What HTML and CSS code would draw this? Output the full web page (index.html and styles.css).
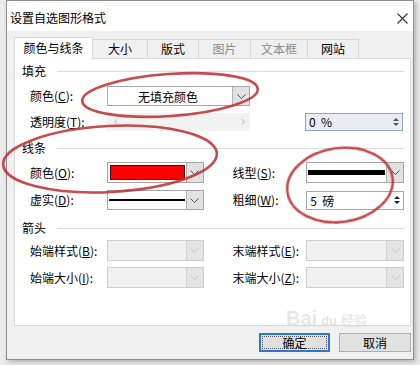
FILE: index.html
```html
<!DOCTYPE html>
<html lang="zh">
<head>
<meta charset="utf-8">
<title>设置自选图形格式</title>
<link rel="stylesheet" href="styles.css">
</head>
<body>
<div class="dialog">
  <div class="titlebar">
    <span class="title">设置自选图形格式</span>
    <svg class="close" viewBox="0 0 11 11"><path d="M0.5 0.5 L10.5 10.5 M10.5 0.5 L0.5 10.5" stroke="#333" stroke-width="1.1" fill="none"/></svg>
  </div>
  <div class="content">
    <div class="tabs">
      <div class="tab active">颜色与线条</div>
      <div class="tab">大小</div>
      <div class="tab">版式</div>
      <div class="tab disabled">图片</div>
      <div class="tab disabled">文本框</div>
      <div class="tab">网站</div>
    </div>
    <div class="panel">
      <div class="ghead g1"><span>填充</span></div>
      <div class="row r1">
        <span class="lbl">颜色(<u>C</u>):</span>
        <div class="combo wide">
          <div class="field center">无填充颜色</div>
          <div class="dd"><svg viewBox="0 0 9 5"><polyline points="0.5,0.5 4.5,4.5 8.5,0.5" fill="none" stroke="#555" stroke-width="1"/></svg></div>
        </div>
      </div>
      <div class="row r2">
        <span class="lbl">透明度(<u>T</u>):</span>
        <div class="slider wide"><span class="sarr">‹</span><span class="sarr">›</span></div>
        <div class="spin pct">
          <div class="val">0  %</div>
          <div class="arrows"><i class="up"></i><i class="down"></i></div>
        </div>
      </div>
      <div class="ghead g2"><span>线条</span></div>
      <div class="row r3">
        <span class="lbl">颜色(<u>O</u>):</span>
        <div class="combo narrow">
          <div class="field"><div class="swatch"></div></div>
          <div class="dd"><svg viewBox="0 0 9 5"><polyline points="0.5,0.5 4.5,4.5 8.5,0.5" fill="none" stroke="#555" stroke-width="1"/></svg></div>
        </div>
        <span class="lbl rlbl">线型(<u>S</u>):</span>
        <div class="combo rnarrow">
          <div class="field"><div class="line thick"></div></div>
          <div class="dd"><svg viewBox="0 0 9 5"><polyline points="0.5,0.5 4.5,4.5 8.5,0.5" fill="none" stroke="#555" stroke-width="1"/></svg></div>
        </div>
      </div>
      <div class="row r4">
        <span class="lbl">虚实(<u>D</u>):</span>
        <div class="combo narrow">
          <div class="field"><div class="line"></div></div>
          <div class="dd"><svg viewBox="0 0 9 5"><polyline points="0.5,0.5 4.5,4.5 8.5,0.5" fill="none" stroke="#555" stroke-width="1"/></svg></div>
        </div>
        <span class="lbl rlbl">粗细(<u>W</u>):</span>
        <div class="spin rnarrow">
          <div class="val">5  磅</div>
          <div class="arrows"><i class="up"></i><i class="down"></i></div>
        </div>
      </div>
      <div class="ghead g3"><span>箭头</span></div>
      <div class="row r5">
        <span class="lbl">始端样式(<u>B</u>):</span>
        <div class="combo narrow off">
          <div class="field"></div>
          <div class="dd"><svg viewBox="0 0 9 5"><polyline points="0.5,0.5 4.5,4.5 8.5,0.5" fill="none" stroke="#c4c4c4" stroke-width="1"/></svg></div>
        </div>
        <span class="lbl rlbl">末端样式(<u>E</u>):</span>
        <div class="combo rnarrow off">
          <div class="field"></div>
          <div class="dd"><svg viewBox="0 0 9 5"><polyline points="0.5,0.5 4.5,4.5 8.5,0.5" fill="none" stroke="#c4c4c4" stroke-width="1"/></svg></div>
        </div>
      </div>
      <div class="row r6">
        <span class="lbl">始端大小(<u>I</u>):</span>
        <div class="combo narrow off">
          <div class="field"></div>
          <div class="dd"><svg viewBox="0 0 9 5"><polyline points="0.5,0.5 4.5,4.5 8.5,0.5" fill="none" stroke="#c4c4c4" stroke-width="1"/></svg></div>
        </div>
        <span class="lbl rlbl">末端大小(<u>Z</u>):</span>
        <div class="combo rnarrow off">
          <div class="field"></div>
          <div class="dd"><svg viewBox="0 0 9 5"><polyline points="0.5,0.5 4.5,4.5 8.5,0.5" fill="none" stroke="#c4c4c4" stroke-width="1"/></svg></div>
        </div>
      </div>
    </div>
    <div class="footer">
      <button class="btn default"><span class="focus">确定</span></button>
      <button class="btn">取消</button>
    </div>
  </div>
</div>
<div class="wm"><span class="wm-bai">Bai</span><span class="wm-du">du</span><span class="wm-jy">经验</span></div>
<svg class="marks" viewBox="0 0 420 365">
  <g fill="none" stroke="#c0363a" stroke-width="2.6" opacity="0.9">
    <ellipse cx="170" cy="95" rx="88" ry="21" transform="rotate(-4 170 95)"/>
    <ellipse cx="110" cy="159" rx="107" ry="33" transform="rotate(-3 110 159)"/>
    <ellipse cx="340" cy="185" rx="53" ry="37" transform="rotate(-8 340 185)"/>
  </g>
</svg>
</body>
</html>
```

FILE: styles.css
```css
* { box-sizing: border-box; }

body {
  margin: 0;
  width: 420px;
  height: 365px;
  overflow: hidden;
  position: relative;
  background: #ececec;
  font-family: "Noto Sans CJK SC", "Noto Sans", sans-serif;
  font-size: 12px;
  color: #000;
}

u { text-decoration: underline; text-underline-offset: 1px; }

.dialog {
  margin-left: 6px;
  width: 408px;
  height: 360px;
  border: 1px solid #8e8e8e;
  background: #f0f0f0;
  box-shadow: 2px 2px 5px rgba(0, 0, 0, 0.25);
  display: flex;
  flex-direction: column;
}

.titlebar {
  height: 30px;
  background: #fff;
  display: flex;
  justify-content: space-between;
  align-items: flex-start;
  padding: 9px 5px 0 3px;
}

.title { line-height: 16px; }

.close { width: 11px; height: 11px; margin-top: 3px; }

.content {
  flex: 1;
  display: flex;
  flex-direction: column;
  padding: 6px 2px 0 7px;
}

.tabs {
  display: flex;
  height: 21px;
  position: relative;
  z-index: 1;
}

.tab {
  height: 19px;
  margin-top: 2px;
  margin-left: -1px;
  border: 1px solid #d9d9d9;
  border-bottom: none;
  background: #f0f0f0;
  display: flex;
  align-items: center;
  justify-content: center;
  line-height: 1;
  font-size: 12px;
}

.tab.disabled { color: #8d8d8d; }

.tab.active {
  margin-left: 0;
  margin-top: 0;
  height: 22px;
  background: #fff;
  padding-bottom: 1px;
}

.tab:nth-child(1) { width: 79px; }
.tab:nth-child(2) { width: 56px; }
.tab:nth-child(3) { width: 52px; }
.tab:nth-child(4) { width: 53px; }
.tab:nth-child(5) { width: 58px; }
.tab:nth-child(6) { width: 52px; }

.panel {
  height: 268px;
  background: #fff;
  border: 1px solid #d9d9d9;
  padding: 5px 6px 0 0;
}

.ghead {
  display: flex;
  align-items: center;
  height: 14px;
  padding-left: 7px;
  line-height: 14px;
}

.ghead::after {
  content: "";
  flex: 1;
  height: 1px;
  background: #dcdcdc;
  margin-left: 11px;
}

.g2 { margin-top: 10px; }
.g3 { margin-top: 11px; }

.row {
  display: flex;
  align-items: center;
  padding-left: 15px;
}

.r1 { margin-top: 8px; height: 20px; }
.r2 { margin-top: 6px; height: 19px; }
.r3 { margin-top: 7px; height: 21px; }
.r4 { margin-top: 7px; height: 20px; }
.r5 { margin-top: 5px; height: 21px; }
.r6 { margin-top: 6px; height: 21px; }

.lbl {
  width: 77px;
  white-space: nowrap;
  line-height: 14px;
}

.rlbl {
  margin-left: 29px;
  width: 74px;
}

.combo {
  display: flex;
  height: 100%;
  border: 1px solid #a6a6a6;
  background: #fff;
}

.wide { width: 143px; }
.narrow { width: 97px; }
.rnarrow { width: 98px; }

.field {
  flex: 1;
  display: flex;
  align-items: center;
  min-width: 0;
}

.field.center { justify-content: center; padding-right: 4px; }

.dd {
  width: 17px;
  background: #e1e1e1;
  border-left: 1px solid #b3b3b3;
  display: flex;
  align-items: center;
  justify-content: center;
}

.dd svg { width: 9px; height: 5px; display: block; }

.swatch {
  flex: 1;
  align-self: stretch;
  margin: 2px 1px 2px 2px;
  border: 1px solid #3a1010;
  background: #ff0000;
}

.line {
  flex: 1;
  height: 2px;
  background: #000;
  margin: 0 1px 0 1px;
}

.line.thick { height: 5px; }

.combo.off {
  background: #f0f0f0;
  border-color: #cfcfcf;
}

.combo.off .dd {
  background: #e4e4e4;
  border-left-color: #d2d2d2;
}

.slider {
  height: 18px;
  background: #f2f2f2;
  display: flex;
  justify-content: space-between;
  align-items: center;
  padding: 0 4px 1px 6px;
  color: #c6c6c6;
  font-family: "DejaVu Sans", sans-serif;
  font-size: 14px;
  line-height: 1;
}

.spin {
  display: flex;
  height: 19px;
  border: 1px solid #a6a6a6;
  background: #fff;
}

.spin .val {
  flex: 1;
  display: flex;
  align-items: center;
  padding-left: 3px;
  white-space: pre;
  font-family: "Noto Sans CJK SC", sans-serif;
}

.spin.pct {
  margin-left: 55px;
  width: 98px;
  height: 18px;
  background: #e9ecf3;
  border-color: #8fa4c8;
}

.arrows {
  width: 13px;
  display: flex;
  flex-direction: column;
  align-items: center;
  justify-content: center;
  gap: 2px;
}

.arrows i {
  display: block;
  width: 0;
  height: 0;
  border-left: 3px solid transparent;
  border-right: 3px solid transparent;
}

.arrows .up { border-bottom: 3px solid #222; }
.arrows .down { border-top: 3px solid #222; }

.pct .arrows .up { border-bottom-color: #555; }
.pct .arrows .down { border-top-color: #555; }

.footer {
  display: flex;
  justify-content: flex-end;
  gap: 9px;
  margin-top: 7px;
}

.btn {
  width: 72px;
  height: 19px;
  padding: 0;
  margin: 0;
  background: #e1e1e1;
  border: 1px solid #adadad;
  font-family: "Noto Sans CJK SC", sans-serif;
  font-size: 12px;
  color: #000;
  line-height: 1;
  display: flex;
  align-items: center;
  justify-content: center;
}

.btn.default {
  width: 71px;
  border: 2px solid #2d79c7;
  padding: 1px;
}

.focus {
  width: 100%;
  height: 100%;
  border: 1px dotted #555;
  display: flex;
  align-items: center;
  justify-content: center;
}

.wm {
  position: absolute;
  left: 286px;
  top: 308px;
  display: flex;
  align-items: flex-end;
  gap: 4px;
  pointer-events: none;
  color: rgba(215, 215, 215, 0.6);
  font-family: "Liberation Sans", sans-serif;
  font-weight: bold;
}

.wm-bai { font-size: 20px; line-height: 20px; }
.wm-du { font-size: 13px; line-height: 15px; color: rgba(200, 200, 200, 0.5); }
.wm-jy { font-size: 13px; line-height: 16px; color: rgba(210, 210, 210, 0.5); font-family: "Noto Sans CJK SC", sans-serif; }

.marks {
  position: absolute;
  left: 0;
  top: 0;
  width: 420px;
  height: 365px;
  pointer-events: none;
}
```
